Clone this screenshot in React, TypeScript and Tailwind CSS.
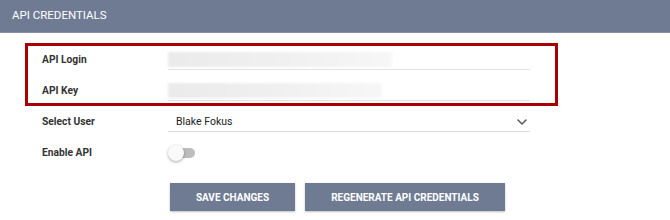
import React from "react";

function Label({ children }: { children: React.ReactNode }) {
  return (
    <div className="w-[126px] shrink-0 text-[10.25px] font-bold text-[#333]">{children}</div>
  );
}

function BlurField({ fill }: { fill: string }) {
  return (
    <div className="relative h-[20px] w-[362px] border-b border-[#e3e3e3]">
      <div
        className={`absolute left-0 top-[2px] h-[15px] bg-gradient-to-r from-[#ebebeb] via-[#f0f0f0] to-[#f7f7f7] blur-[1px] ${fill}`}
      />
    </div>
  );
}

export default function App() {
  return (
    <div className="h-[220px] w-[670px] bg-white font-[Roboto,'Liberation_Sans',Arial,sans-serif]">
      <div className="flex h-[33px] items-center border-b border-[#8590a5] bg-[#6e7b93] px-3 text-[11.5px] text-white">
        API CREDENTIALS
      </div>
      <div className="ml-[25px] mt-[10px] w-[533px] border-[3px] border-[#a80000] pb-[2px] pl-[14px] pt-[4px]">
        <div className="flex h-[20px] items-center">
          <Label>API Login</Label>
          <BlurField fill="w-[224px]" />
        </div>
        <div className="mt-[11px] flex h-[20px] items-center">
          <Label>API Key</Label>
          <BlurField fill="w-[214px]" />
        </div>
      </div>
      <div className="ml-[42px] mt-[6px] flex h-[20px] items-center">
        <Label>Select User</Label>
        <div className="flex h-[20px] w-[362px] items-center justify-between border-b border-[#dcdcdc] pl-[8px] pr-[3px] text-[10.5px] text-[#222]">
          <span>Blake Fokus</span>
          <svg width="10" height="6" viewBox="0 0 10 6" fill="none">
            <path d="M1 1l4 4 4-4" stroke="#555" strokeWidth="1.5" strokeLinecap="round" strokeLinejoin="round" />
          </svg>
        </div>
      </div>
      <div className="ml-[42px] mt-[11px] flex h-[20px] items-center">
        <Label>Enable API</Label>
        <div className="relative h-[16px] w-[28px]">
          <div className="absolute left-[7px] top-[3px] h-[10px] w-[20px] rounded-full bg-[#bdbdbd]" />
          <div className="absolute left-0 top-0 h-[16px] w-[16px] rounded-full bg-[#fafafa] shadow-[0_1px_3px_rgba(0,0,0,0.35)]" />
        </div>
      </div>
      <div className="ml-[170px] mt-[20px] flex gap-[10px]">
        <button className="h-[28px] w-[125px] bg-[#6e7b93] text-[10px] font-bold text-white shadow-[0_1px_2px_rgba(0,0,0,0.25)]">
          SAVE CHANGES
        </button>
        <button className="h-[28px] w-[200px] bg-[#6e7b93] text-[10px] font-bold text-white shadow-[0_1px_2px_rgba(0,0,0,0.25)]">
          REGENERATE API CREDENTIALS
        </button>
      </div>
    </div>
  );
}
